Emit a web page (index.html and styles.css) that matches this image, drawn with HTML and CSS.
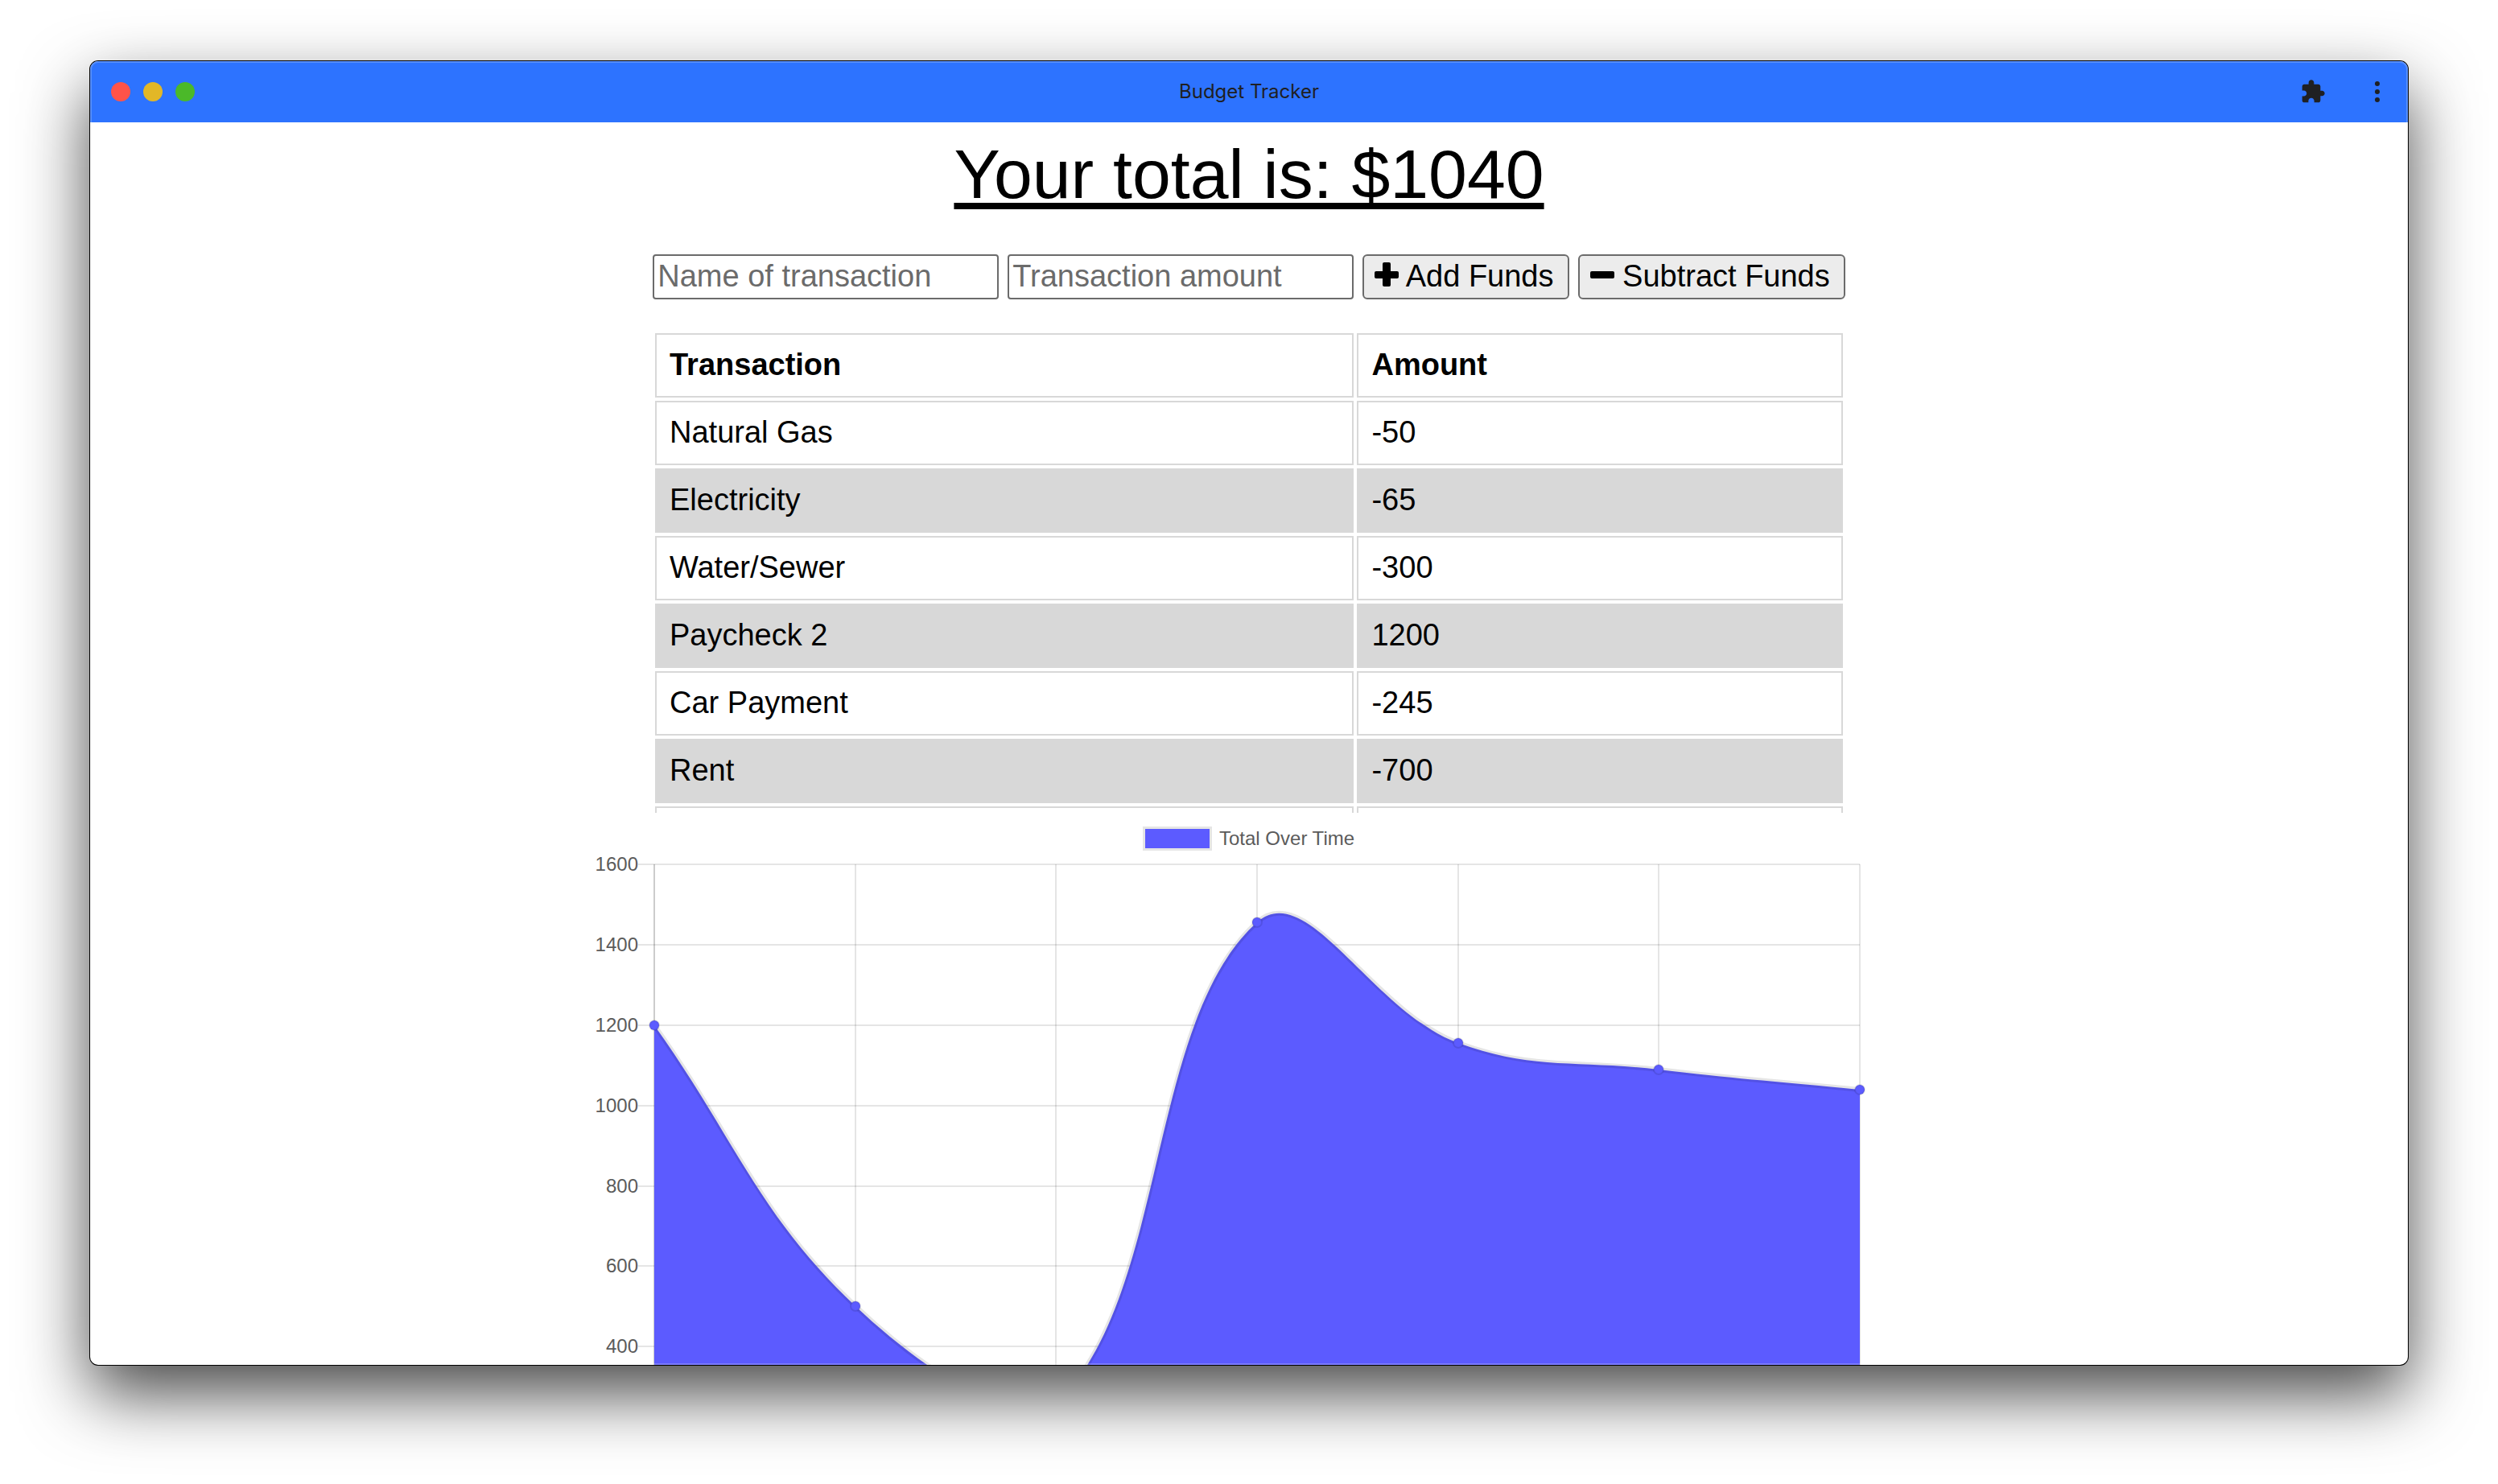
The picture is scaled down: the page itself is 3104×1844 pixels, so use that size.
FILE: index.html
```html
<!DOCTYPE html>
<html lang="en">
<head>
  <meta charset="utf-8">
  <meta name="viewport" content="width=device-width, initial-scale=1">
  <title>Budget Tracker</title>
  <link rel="stylesheet" href="styles.css">
</head>
<body>
  <div class="window">
    <header class="titlebar">
      <div class="traffic">
        <button class="light light-close" type="button" aria-label="Close"></button>
        <button class="light light-minimize" type="button" aria-label="Minimize"></button>
        <button class="light light-zoom" type="button" aria-label="Zoom"></button>
      </div>
      <div class="window-title">Budget Tracker</div>
      <div class="tools">
        <button class="tool" type="button" aria-label="Extensions">
          <svg viewBox="0 0 24 24" aria-hidden="true"><path d="M20.500 11H19V7c0-1.100-.9-2-2-2h-4V3.500C13 2.120 11.880 1 10.500 1S8 2.120 8 3.500V5H4c-1.100 0-1.990.9-1.990 2v3.800H3.500c1.490 0 2.700 1.210 2.700 2.700s-1.210 2.700-2.700 2.700H2V20c0 1.100.9 2 2 2h3.800v-1.500c0-1.490 1.210-2.700 2.700-2.700 1.490 0 2.700 1.210 2.700 2.700V22H17c1.100 0 2-.9 2-2v-4h1.500c1.380 0 2.500-1.120 2.500-2.500S21.880 11 20.500 11z"/></svg>
        </button>
        <button class="tool" type="button" aria-label="More options">
          <svg viewBox="0 0 32 32" aria-hidden="true"><circle cx="16" cy="6" r="3"/><circle cx="16" cy="16" r="3"/><circle cx="16" cy="26" r="3"/></svg>
        </button>
      </div>
    </header>

    <main class="content">
      <h1 class="total">Your total is: $1040</h1>

      <form class="entry">
        <input class="field" type="text" placeholder="Name of transaction" aria-label="Name of transaction">
        <input class="field" type="text" inputmode="decimal" placeholder="Transaction amount" aria-label="Transaction amount">
        <button class="action" type="button"><svg class="action-icon" viewBox="0 0 30 30" aria-hidden="true"><rect x="0" y="11" width="30" height="9" rx="2"/><rect x="10" y="0" width="10" height="30" rx="2"/></svg> Add Funds</button>
        <button class="action" type="button"><svg class="action-icon" viewBox="0 0 30 30" aria-hidden="true"><rect x="0" y="11" width="30" height="9" rx="2"/></svg> Subtract Funds</button>
      </form>

      <div class="ledger">
        <table class="transactions">
          <thead>
            <tr><th class="col-name" scope="col">Transaction</th><th scope="col">Amount</th></tr>
          </thead>
          <tbody>
            <tr><td>Natural Gas</td><td>-50</td></tr>
            <tr><td>Electricity</td><td>-65</td></tr>
            <tr><td>Water/Sewer</td><td>-300</td></tr>
            <tr><td>Paycheck 2</td><td>1200</td></tr>
            <tr><td>Car Payment</td><td>-245</td></tr>
            <tr><td>Rent</td><td>-700</td></tr>
            <tr><td>&nbsp;</td><td>&nbsp;</td></tr>
          </tbody>
        </table>
      </div>

      <svg class="chart" viewBox="0 0 1632 780" role="img" aria-label="Total Over Time">
        <rect class="legend-box" x="687" y="20" width="80" height="24"/>
        <rect class="area" x="687" y="20" width="80" height="24"/>
        <text class="label" x="779" y="40">Total Over Time</text>

        <path class="grid" d="M57 64H1575M57 164H1575M57 264H1575M57 364H1575M57 464H1575M57 563H1575M57 663H1575M57 763H1575"/>
        <path class="grid" d="M327 64V763M576 64V763M826 64V763M1076 64V763M1325 64V763M1575 64V763"/>
        <path class="grid axis" d="M77 64V763"/>

        <g class="label tick">
          <text x="57" y="72">1600</text>
          <text x="57" y="172">1400</text>
          <text x="57" y="272">1200</text>
          <text x="57" y="372">1000</text>
          <text x="57" y="472">800</text>
          <text x="57" y="571">600</text>
          <text x="57" y="671">400</text>
        </g>

        <path class="area" d="M77 264C177 404 206 499 327 613C405 687 516 763 576 735C716 601 688 260 826 136C888 80 969 247 1076 286C1168 320 1225 307 1325 319C1425 331 1475 334 1575 344V763H77Z"/>
        <path class="line" d="M77 264C177 404 206 499 327 613C405 687 516 763 576 735C716 601 688 260 826 136C888 80 969 247 1076 286C1168 320 1225 307 1325 319C1425 331 1475 334 1575 344"/>
        <g class="point">
          <circle cx="77" cy="264" r="6"/>
          <circle cx="327" cy="613" r="6"/>
          <circle cx="576" cy="735" r="6"/>
          <circle cx="826" cy="136" r="6"/>
          <circle cx="1076" cy="286" r="6"/>
          <circle cx="1325" cy="319" r="6"/>
          <circle cx="1575" cy="344" r="6"/>
        </g>
      </svg>
    </main>
  </div>
</body>
</html>
```
FILE: styles.css
```css
* {
  box-sizing: border-box;
}

body {
  margin: 0;
  height: 100vh;
  padding: 76px 112px 148px;
  display: flex;
  background: #fff;
  color: #000;
  font-family: "Liberation Sans", Arial, Helvetica, sans-serif;
  font-size: 38px;
  line-height: 44px;
}

/* Desktop window */
.window {
  position: relative;
  flex: 1;
  min-width: 0;
  display: flex;
  flex-direction: column;
  overflow: hidden;
  border-radius: 10px;
  background: #fff;
  box-shadow: 0 0 0 1px #000, 0 36px 84px rgba(0, 0, 0, 0.72);
}

/* Thin light rim drawn over the window's edge */
.window::after {
  content: "";
  position: absolute;
  inset: 0;
  border-radius: inherit;
  box-shadow: inset 0 0 0 2px rgba(255, 255, 255, 0.2);
  pointer-events: none;
}

.titlebar {
  flex: none;
  height: 76px;
  padding: 0 22px;
  display: grid;
  grid-template-columns: 1fr auto 1fr;
  align-items: center;
  background: #2d73ff;
}

.traffic,
.tools {
  display: flex;
  align-items: center;
}

.traffic {
  gap: 16px;
  padding-left: 4px;
}

.tools {
  gap: 48px;
  justify-content: flex-end;
}

.light,
.tool {
  padding: 0;
  border: 0;
  background: none;
}

.light {
  width: 24px;
  height: 24px;
  border-radius: 50%;
}

.light-close {
  background: #ff5349;
}

.light-minimize {
  background: #e2b727;
}

.light-zoom {
  background: #4bb929;
}

.tool svg {
  display: block;
  width: 32px;
  height: 32px;
  fill: #1f2023;
}

.window-title {
  color: #1f2023;
  font-family: Inter, "Liberation Sans", sans-serif;
  font-size: 24px;
  line-height: 28px;
}

/* Page */
.content {
  flex: 1;
  min-height: 0;
  overflow: hidden;
  padding-top: 14px;
  display: flex;
  flex-direction: column;
  align-items: center;
}

.content > * {
  flex: none;
}

.total {
  margin: 0 0 50px;
  font-size: 86px;
  line-height: 100px;
  font-weight: 400;
  text-decoration: underline;
  text-decoration-thickness: 8px;
  text-underline-offset: 6px;
}

.entry {
  display: flex;
  flex-wrap: wrap;
  justify-content: center;
  gap: 11px;
  margin-bottom: 38px;
}

.field,
.action {
  height: 56px;
  border: 2px solid #6b6b6b;
  font: inherit;
  color: #000;
}

.field {
  width: 430px;
  padding: 0 4px 2px;
  border-radius: 4px;
  background: #fff;
}

.field::placeholder {
  color: #6b6b6b;
  opacity: 1;
}

.action {
  padding: 0 17px 2px 13px;
  border-radius: 6px;
  background: #ececec;
}

.action-icon {
  width: 30px;
  height: 30px;
  vertical-align: baseline;
}

.ledger {
  width: 1484px;
  max-width: 100%;
  height: 600px;
  overflow: hidden;
}

.transactions {
  width: 100%;
  table-layout: fixed;
  border-collapse: separate;
  border-spacing: 4px;
}

.transactions th,
.transactions td {
  padding: 15px 16px 17px;
  border: 2px solid #d8d8d8;
  text-align: left;
}

.col-name {
  width: 59%;
}

.transactions tbody tr:nth-child(even) td {
  background: #d8d8d8;
}

/* Chart */
.chart {
  display: block;
  width: 1632px;
  max-width: 100%;
}

.label {
  fill: #5b5b5b;
  font-size: 24px;
}

.tick {
  text-anchor: end;
}

.grid {
  fill: none;
  stroke: rgba(0, 0, 0, 0.1);
  stroke-width: 2px;
}

.axis {
  stroke: rgba(0, 0, 0, 0.2);
}

.area {
  fill: #5c5bff;
}

.legend-box,
.line {
  fill: none;
  stroke: rgba(0, 0, 0, 0.1);
  stroke-width: 6px;
}

.point {
  fill: #5c5bff;
  stroke: rgba(0, 0, 0, 0.1);
  stroke-width: 2px;
}
```
